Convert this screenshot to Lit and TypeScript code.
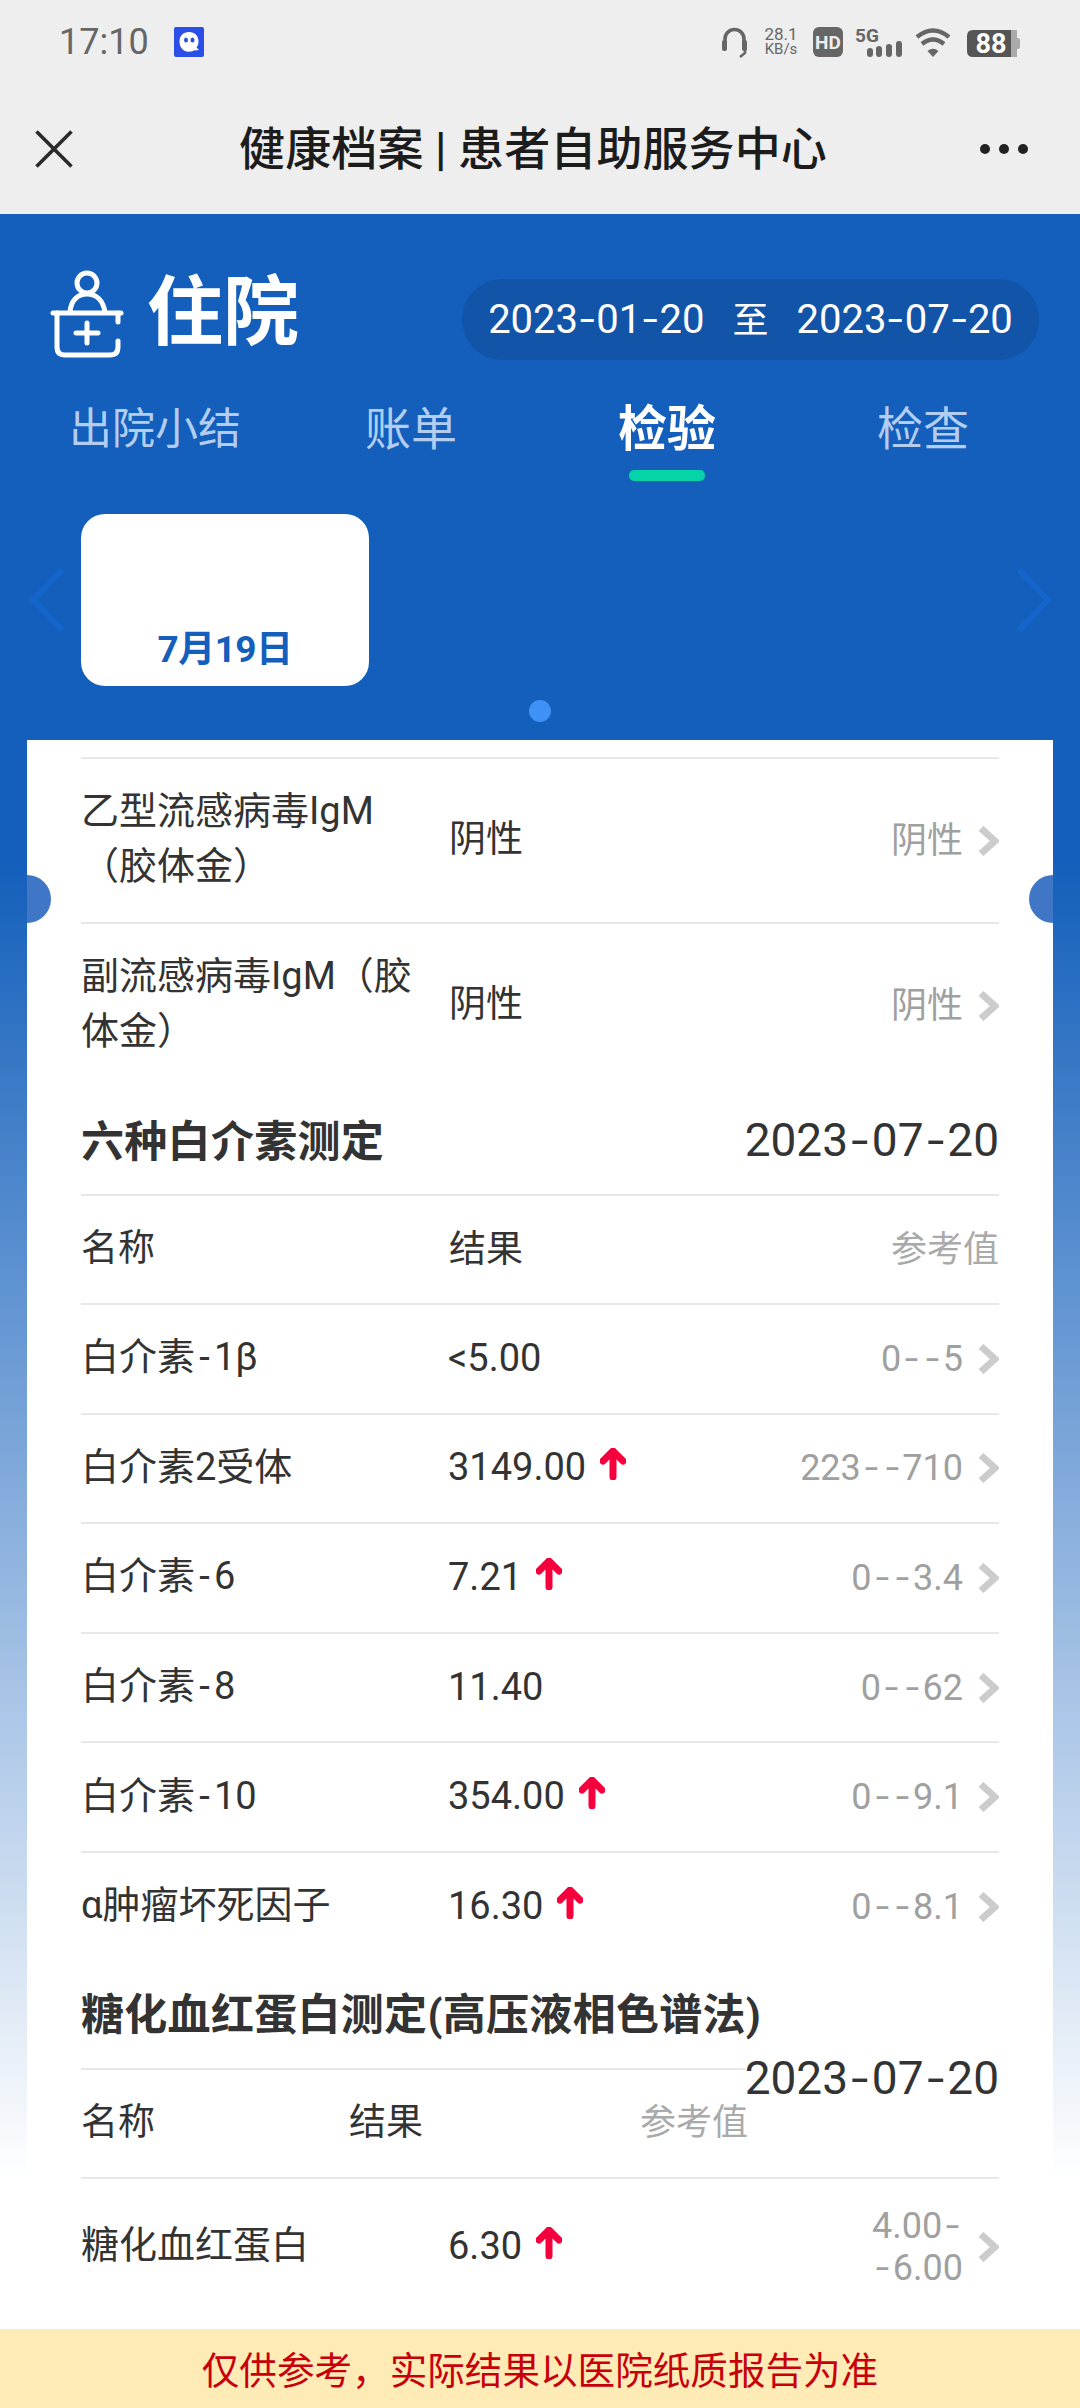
import { LitElement, html, css, svg } from "lit";
import { customElement } from "lit/decorators.js";

type Row = { name: string; result: string; up?: boolean; ref: string };

const FLU: Row[] = [
  { name: "乙型流感病毒IgM（胶体金）", result: "阴性", ref: "阴性" },
  { name: "副流感病毒IgM（胶体金）", result: "阴性", ref: "阴性" },
];
const IL: Row[] = [
  { name: "白介素-1β", result: "<5.00", ref: "0--5" },
  { name: "白介素2受体", result: "3149.00", up: true, ref: "223--710" },
  { name: "白介素-6", result: "7.21", up: true, ref: "0--3.4" },
  { name: "白介素-8", result: "11.40", ref: "0--62" },
  { name: "白介素-10", result: "354.00", up: true, ref: "0--9.1" },
  { name: "α肿瘤坏死因子", result: "16.30", up: true, ref: "0--8.1" },
];
const HB: Row[] = [{ name: "糖化血红蛋白", result: "6.30", up: true, ref: "4.00-\n-6.00" }];

const chevron = svg`<path d="M3 2.5 L17 15 L3 27.5" fill="none" stroke="#cccccc" stroke-width="7"/>`;
const arrow = svg`<path d="M13 29 V4 M3 13 L13 3 L23 13" fill="none" stroke="#f5003c" stroke-width="7" stroke-linecap="round" stroke-linejoin="round"/>`;

/* The reference font draws hyphens wider than Roboto does. */
const hy = (text: string) =>
  text.split(/(-)/).map((part) => (part === "-" ? html`<span class="hy">-</span>` : part));

@customElement("app-root")
export class AppRoot extends LitElement {
  static styles = css`
    :host {
      display: block;
      width: 1080px;
      height: 2408px;
      font-family: Roboto, "Noto Sans CJK SC", sans-serif;
    }
    .hy { display: inline-block; padding: 0 0.09em; transform: scaleX(1.35); }
    .page {
      width: 1080px;
      height: 2408px;
      display: flex;
      flex-direction: column;
      overflow: hidden;
      background: linear-gradient(#135fbb 860px, #ffffff 2180px);
    }
    .status {
      height: 84px;
      flex: none;
      box-sizing: border-box;
      padding: 27px 60px 0 59px;
      background: #eeeeee;
      display: flex;
      justify-content: space-between;
      align-items: flex-start;
      color: #666666;
    }
    .status-left { display: flex; align-items: center; gap: 25px; height: 30px; }
    .time { font-size: 36px; line-height: 36px; }
    .status-right { display: flex; align-items: flex-start; gap: 14px; }
    .status-right svg { display: block; overflow: visible; }
    .speed { width: 36px; text-align: center; margin-top: -1px; }
    .speed div:first-child { font-size: 17px; line-height: 17px; }
    .speed div:last-child { font-size: 15px; line-height: 15px; margin-top: -1px; }
    .icon-text { font-family: Roboto, sans-serif; font-weight: 700; }
    .nav {
      height: 130px;
      flex: none;
      background: #eeeeee;
      box-sizing: border-box;
      padding: 0 49px 0 35px;
      display: grid;
      grid-template-columns: 1fr auto 1fr;
      align-items: center;
    }
    .nav-title { font-size: 46px; letter-spacing: 0.1px; color: #1c1c1c; line-height: 60px; white-space: nowrap; font-weight: 500; }
    .dots { justify-self: end; display: flex; gap: 9px; margin-right: 3px; }
    .dots span { width: 10px; height: 10px; border-radius: 50%; background: #222222; }
    .hero { height: 526px; flex: none; box-sizing: border-box; padding-top: 54px; }
    .head { display: flex; height: 92px; padding: 0 41px 0 50px; align-items: flex-start; }
    .head svg { flex: none; display: block; }
    .big { font-size: 76px; font-weight: 700; color: #ffffff; line-height: 90px; margin-left: 23px; flex: 1; }
    .pill {
      margin-top: 11px;
      height: 81px;
      width: 577px;
      border-radius: 41px;
      background: #1254a8;
      color: #ffffff;
      display: flex;
      align-items: center;
      justify-content: center;
      gap: 28px;
      font-size: 40px;
    }
    .pill .to { font-size: 36px; margin-top: -5px; }
    .tabs { display: grid; grid-template-columns: repeat(4, 256px); padding: 39px 0 0 27px; height: 116px; box-sizing: border-box; }
    .tab { display: flex; flex-direction: column; align-items: center; font-size: 46px; line-height: 60px; color: #b3cdf0; }
    .tab.small { font-size: 43px; }
    .tab.active { color: #ffffff; font-size: 49px; font-weight: 700; line-height: 62px; }
    .tab i { display: block; width: 76px; height: 11px; border-radius: 5px; background: #05d4a8; margin-top: 9px; }
    .carousel { position: relative; margin-top: 38px; height: 172px; }
    .tile {
      margin-left: 81px;
      width: 288px;
      height: 172px;
      border-radius: 24px;
      background: #ffffff;
      box-sizing: border-box;
      display: flex;
      align-items: flex-end;
      justify-content: center;
      padding-bottom: 14px;
      color: #135fbb;
      font-size: 37px;
      letter-spacing: -0.5px;
      font-weight: 700;
      line-height: 44px;
    }
    .car-l, .car-r { position: absolute; top: 53px; display: block; }
    .car-l { left: 30px; }
    .car-r { left: 1015px; }
    .pager { width: 22px; height: 22px; border-radius: 50%; background: #3d91f7; margin: 14px auto 0; }
    .card {
      position: relative;
      flex: none;
      height: 1589px;
      margin: 0 27px;
      background: #ffffff;
      box-sizing: border-box;
      padding: 17px 54px 0;
    }
    .notch { position: absolute; top: 135px; width: 24px; height: 48px; background: #3f76c6; }
    .notch.l { left: 0; border-radius: 0 24px 24px 0; }
    .notch.r { right: 0; border-radius: 24px 0 0 24px; }
    .row, .hdr {
      display: flex;
      align-items: center;
      border-top: 2px solid #e8e8e8;
      box-sizing: border-box;
      color: #333333;
    }
    .row { height: 109.6px; font-size: 38px; }
    .row.tall { height: 165px; }
    .row.last { height: 138px; }
    .hdr { height: 109px; font-size: 37px; line-height: 52px; }
    .name { width: 368px; flex: none; padding: 0 28px 2px 0; box-sizing: border-box; line-height: 55px; }
    .name .hy { padding: 0 0.11em; transform: none; }
    .tall .name { padding-bottom: 4px; }
    .res { display: flex; align-items: flex-start; gap: 14px; font-size: 38px; line-height: 50px; margin: -2px 0 0 -1px; }
    .res svg { display: block; margin-top: 6px; flex: none; }
    .res.plain { font-size: 37px; margin-left: 0; }
    .ref {
      margin-left: auto;
      display: flex;
      align-items: center;
      gap: 15px;
      color: #a0a0a0;
      font-size: 36px;
      line-height: 42px;
      text-align: right;
      white-space: pre-line;
    }
    .ref .hy { padding: 0 0.15em; }
    .ref svg { display: block; flex: none; }
    .hdr .ref { color: #aaaaaa; }
    .sec-title { height: 107px; padding-bottom: 6px; box-sizing: border-box; display: flex; align-items: center; justify-content: space-between; font-size: 43px; letter-spacing: 0.3px; font-weight: 700; color: #333333; white-space: nowrap; position: relative; }
    .date { font-size: 46px; font-weight: 400; letter-spacing: 0; margin-top: 4px; }
    .date .hy { padding: 0 0.12em; }
    .date.over {
      position: absolute;
      right: 0;
      top: 91px;
      margin-top: 0;
      line-height: 52px;
      background: #ffffff;
      z-index: 1;
    }
    .hdr.narrow .c1 { width: 268px; flex: none; }
    .hdr.narrow .c3 { margin-left: 217px; color: #aaaaaa; font-size: 36px; }
    .banner {
      flex: none;
      height: 79px;
      box-sizing: border-box;
      padding-bottom: 2px;
      background: #feebb6;
      color: #c8000a;
      font-size: 37.6px;
      display: flex;
      align-items: center;
      justify-content: center;
    }
  `;

  private row(r: Row, cls = "", plain = false) {
    return html`<div class="row ${cls}">
      <div class="name">${hy(r.name)}</div>
      <div class="res ${plain ? "plain" : ""}">
        <span>${r.result}</span>
        ${r.up ? html`<svg width="26" height="32" viewBox="0 0 26 32">${arrow}</svg>` : ""}
      </div>
      <div class="ref">
        <span>${hy(r.ref)}</span>
        <svg width="21" height="30" viewBox="0 0 21 30">${chevron}</svg>
      </div>
    </div>`;
  }

  render() {
    return html`<div class="page">
      <div class="status">
        <div class="status-left">
          <span class="time">17:10</span>
          <svg width="30" height="30" viewBox="0 0 30 30">
            <rect width="30" height="30" rx="2" fill="#2b4fe6" />
            <path d="M15 5 C21 5 24.5 9 24.5 14.5 C24.5 17 23.8 19 22.5 20.5 L25 23 L20 23.5 C18.5 24.3 17 24.7 15 24.7 C9 24.7 5.5 20.5 5.5 14.5 C5.5 9 9 5 15 5 Z" fill="#ffffff" />
            <ellipse cx="12" cy="13" rx="2" ry="2.6" fill="#2b4fe6" />
            <ellipse cx="18.5" cy="13" rx="2" ry="2.6" fill="#2b4fe6" />
          </svg>
        </div>
        <div class="status-right">
          <svg width="27" height="30" viewBox="0 0 27 30">
            <path d="M3 17 V12 A9.5 9.5 0 0 1 22 12 V17" fill="none" stroke="#666" stroke-width="3.6" />
            <rect x="0" y="13" width="5" height="11" rx="2" fill="#666" />
            <rect x="20" y="13" width="5" height="11" rx="2" fill="#666" />
            <path d="M23 23 V26 L18 30" fill="none" stroke="#666" stroke-width="2.6" />
          </svg>
          <div class="speed"><div>28.1</div><div>KB/s</div></div>
          <svg width="30" height="30" viewBox="0 0 30 30">
            <rect width="30" height="30" rx="6" fill="#666" />
            <text x="15" y="21.5" text-anchor="middle" font-size="19" fill="#eee" class="icon-text">HD</text>
          </svg>
          <svg width="44" height="30" viewBox="0 0 44 30">
            <text x="-2" y="15" font-size="19" fill="#666" class="icon-text">5G</text>
            <rect x="10" y="21" width="6" height="9" rx="3" fill="#666" />
            <rect x="19" y="19" width="6" height="11" rx="3" fill="#666" />
            <rect x="29" y="17" width="6" height="13" rx="3" fill="#666" />
            <rect x="39" y="14" width="6" height="16" rx="3" fill="#666" />
          </svg>
          <svg width="36" height="30" viewBox="0 0 36 30">
            <path d="M2 10 Q18 -3 34 10" fill="none" stroke="#666" stroke-width="4.4" />
            <path d="M7 17 Q18 8 29 17" fill="none" stroke="#666" stroke-width="4.4" />
            <path d="M12.5 24 Q18 19.5 23.5 24 L18 30 Z" fill="#666" />
          </svg>
          <svg width="55" height="30" viewBox="0 0 55 30">
            <path d="M8 3 H46 V30 H8 Q2 30 2 24 V9 Q2 3 8 3 Z" fill="#555" />
            <rect x="46" y="3" width="6" height="27" fill="#aaa" />
            <path d="M52 11 h1 q2 0 2 2 v7 q0 2 -2 2 h-1 Z" fill="#aaa" />
            <text x="26" y="26" text-anchor="middle" font-size="27" fill="#fff" class="icon-text">88</text>
          </svg>
        </div>
      </div>

      <div class="nav">
        <svg width="38" height="38" viewBox="0 0 38 38">
          <path d="M1.5 1.5 L36.5 36.5 M36.5 1.5 L1.5 36.5" stroke="#2a2a2a" stroke-width="3.6" fill="none" />
        </svg>
        <div class="nav-title">健康档案 | 患者自助服务中心</div>
        <div class="dots"><span></span><span></span><span></span></div>
      </div>

      <div class="hero">
        <div class="head">
          <svg width="74" height="92" viewBox="50 268 74 92">
            <g fill="none" stroke="#fff" stroke-width="5" stroke-linecap="round" stroke-linejoin="round">
              <circle cx="87" cy="283" r="10" />
              <path d="M70 312 C71 300 78 294 87 294 C96 294 103 300 105 312" />
              <path d="M53 313 H121" />
              <path d="M57 313 V347 Q57 355 65 355 H110 Q118 355 118 347 V341" />
              <path d="M118 313 V322" />
              <path d="M76 333 H98 M87 323 V343" />
            </g>
          </svg>
          <div class="big">住院</div>
          <div class="pill"><span>${hy("2023-01-20")}</span><span class="to">至</span><span>${hy("2023-07-20")}</span></div>
        </div>
        <div class="tabs">
          <div class="tab small">出院小结</div>
          <div class="tab">账单</div>
          <div class="tab active">检验<i></i></div>
          <div class="tab">检查</div>
        </div>
        <div class="carousel">
          <div class="tile">7月19日</div>
          <svg class="car-l" width="36" height="66" viewBox="0 0 36 66"><path d="M32 3 L3 33 L32 63" fill="none" stroke="#1566cc" stroke-width="6" /></svg>
          <svg class="car-r" width="36" height="66" viewBox="0 0 36 66"><path d="M4 3 L33 33 L4 63" fill="none" stroke="#1566cc" stroke-width="6" /></svg>
        </div>
        <div class="pager"></div>
      </div>

      <div class="card">
        <div class="notch l"></div>
        <div class="notch r"></div>
        ${FLU.map((r) => this.row(r, "tall", true))}
        <div class="sec-title"><span>六种白介素测定</span><span class="date">${hy("2023-07-20")}</span></div>
        <div class="hdr"><div class="name">名称</div><div>结果</div><div class="ref">参考值</div></div>
        ${IL.map((r) => this.row(r))}
        <div class="sec-title"><span>糖化血红蛋白测定(高压液相色谱法)</span><span class="date over">${hy("2023-07-20")}</span></div>
        <div class="hdr narrow"><div class="c1">名称</div><div>结果</div><div class="c3">参考值</div></div>
        ${HB.map((r) => this.row(r, "last"))}
      </div>

      <div class="banner">仅供参考，实际结果以医院纸质报告为准</div>
    </div>`;
  }
}
